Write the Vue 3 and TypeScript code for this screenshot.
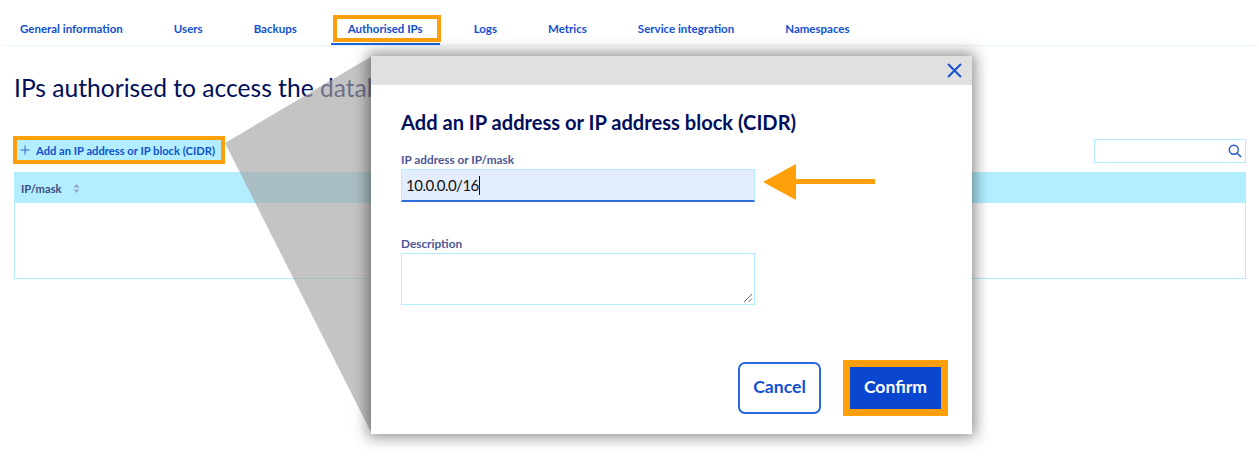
<script setup lang="ts">
const tabs: string[] = ['General information', 'Users', 'Backups', 'Authorised IPs', 'Logs', 'Metrics', 'Service integration', 'Namespaces']
const activeTab = 'Authorised IPs'
</script>

<template>
  <div class="page">
    <nav class="tabs">
      <a v-for="t in tabs" :key="t" class="tab" :class="{ active: t === activeTab }">
        <span class="tab-text">{{ t }}</span>
      </a>
    </nav>
    <main class="content">
      <h1 class="heading">IPs authorised to access the database service</h1>
      <div class="toolbar">
        <button class="add">
          <svg class="plus" viewBox="0 0 10 10" width="10" height="10"><path d="M5 .5v9M.5 5h9" stroke="#3a63c8" stroke-width="1" fill="none" /></svg>
          <span>Add an IP address or IP block (CIDR)</span>
        </button>
        <div class="search">
          <svg viewBox="0 0 14 14" width="14" height="14"><circle cx="5.8" cy="5.8" r="4.5" stroke="#1c55d0" stroke-width="1.4" fill="none" /><path d="M9.2 9.2L13 13" stroke="#1c55d0" stroke-width="1.6" fill="none" /></svg>
        </div>
      </div>
      <div class="table">
        <div class="thead">
          <span>IP/mask</span>
          <svg viewBox="0 0 7 9" width="7" height="9"><path d="M3.5 0L6.5 3.4H.5zM3.5 9L.5 5.6h6z" fill="#9aa2c4" /></svg>
        </div>
        <div class="tbody"></div>
      </div>
    </main>

    <svg class="wedge" width="372" height="457" viewBox="0 0 372 457"><polygon points="225,143 372,56 372,434" fill="rgba(164,164,164,.65)" /></svg>

    <section class="modal">
      <header class="modal-head">
        <svg viewBox="0 0 14 14" width="15" height="15"><path d="M1 1l12 12M13 1L1 13" stroke="#1c55d0" stroke-width="2" fill="none" /></svg>
      </header>
      <div class="modal-body">
        <h2 class="modal-title">Add an IP address or IP address block (CIDR)</h2>
        <label class="field-label">IP address or IP/mask</label>
        <div class="ip-input"><span>10.0.0.0/16</span><i class="caret"></i></div>
        <label class="field-label desc-label">Description</label>
        <div class="desc-input">
          <svg class="grip" viewBox="0 0 10 10" width="10" height="10"><path d="M1 9l8-8M5.5 9L9 5.5" stroke="#666" stroke-width="1" fill="none" /></svg>
        </div>
        <div class="actions">
          <button class="cancel">Cancel</button>
          <button class="confirm">Confirm</button>
        </div>
      </div>
    </section>

    <svg class="arrow" width="114" height="36" viewBox="0 0 114 36"><path d="M0 18L33 0v15h79v5H33v16z" fill="#ff9f0a" /></svg>
  </div>
</template>

<style>
html, body { margin: 0; background: #fff; }
</style>

<style scoped>
.page {
  position: relative;
  width: 1259px;
  height: 457px;
  overflow: hidden;
  background: #fff;
  font-family: Lato, "Open Sans", sans-serif;
  color: #000e5c;
}
.tabs {
  display: flex;
  gap: 17px;
  height: 45px;
  margin: 0 2px 0 3px;
  border-bottom: 1px solid #e6f7fd;
}
.tab {
  display: flex;
  align-items: flex-start;
  height: 45px;
  padding: 0 17px;
  box-sizing: border-box;
  font-size: 11.5px;
  font-weight: 700;
  color: #1150d0;
  position: relative;
  white-space: nowrap;
}
.tab-text { margin-top: 21px; line-height: 16px; }
.tab.active { border-bottom: 2px solid #1c64d8; }
.tab.active::after {
  content: "";
  position: absolute;
  left: 2px;
  right: -1px;
  top: 15px;
  height: 27px;
  border: 4px solid #ff9f0a;
  box-sizing: border-box;
}
.content { padding: 0 13px 0 14px; }
.heading {
  margin: 25px 0 0;
  font-size: 24.6px;
  line-height: 34px;
  font-weight: 400;
  color: #000e5c;
  white-space: nowrap;
}
.toolbar {
  display: flex;
  justify-content: space-between;
  align-items: flex-start;
  margin-top: 34px;
  height: 33px;
}
.add {
  display: flex;
  align-items: center;
  height: 20px;
  width: 204px;
  margin: 1px 0 0 3px;
  padding: 0 0 0 3px;
  border: none;
  background: #b2eeff;
  outline: 4px solid #ff9f0a;
  color: #1150d0;
  font: 700 11.2px Lato, "Open Sans", sans-serif;
  white-space: nowrap;
}
.plus { margin-right: 6px; flex: none; }
.search {
  width: 152px;
  height: 24px;
  border: 1px solid #b2eeff;
  box-sizing: border-box;
  display: flex;
  justify-content: flex-end;
  align-items: center;
  padding-right: 3px;
}
.table { border: 1px solid #b2eeff; }
.thead {
  height: 30px;
  background: #b2eeff;
  display: flex;
  align-items: center;
  gap: 11px;
  padding-left: 6px;
  font-size: 11.2px;
  font-weight: 700;
  color: #3d4a85;
}
.tbody { height: 75px; background: #fff; }
.wedge { position: absolute; left: 0; top: 0; }
.modal {
  position: absolute;
  left: 371px;
  top: 56px;
  width: 601px;
  height: 378px;
  background: #fff;
  box-shadow: 0 0 14px 3px rgba(0, 0, 0, .45);
}
.modal-head {
  height: 29px;
  background: #e0e0e0;
  display: flex;
  justify-content: flex-end;
  align-items: center;
  padding-right: 10px;
}
.modal-body { padding: 25px 25px 0 30px; }
.modal-title {
  margin: 0;
  font-size: 20.1px;
  line-height: 24px;
  font-weight: 700;
  color: #000e5c;
  white-space: nowrap;
}
.field-label {
  display: block;
  margin-top: 18px;
  font-size: 11.8px;
  line-height: 15px;
  font-weight: 700;
  color: #4d5693;
}
.desc-label { margin-top: 34px; }
.ip-input {
  width: 354px;
  height: 33px;
  margin-top: 2px;
  background: #e3edfd;
  border: 1px solid #b2eeff;
  border-bottom: 2px solid #2f6fdc;
  box-sizing: border-box;
  display: flex;
  align-items: center;
  padding-left: 4px;
  font-size: 15px;
  letter-spacing: -0.5px;
  color: #111;
}
.caret { width: 1px; height: 19px; background: #111; }
.desc-input {
  position: relative;
  width: 354px;
  height: 52px;
  margin-top: 2px;
  border: 1px solid #b2eeff;
  box-sizing: border-box;
}
.grip { position: absolute; right: 1px; bottom: 1px; }
.actions {
  display: flex;
  justify-content: flex-end;
  align-items: center;
  gap: 29px;
  margin-top: 57px;
}
.cancel, .confirm {
  font: 700 17.6px Lato, "Open Sans", sans-serif;
  box-sizing: border-box;
  padding: 0 0 4px;
}
.cancel {
  width: 83px;
  height: 52px;
  background: #fff;
  color: #1150d0;
  border: 2px solid #2b68dc;
  border-radius: 7px;
}
.confirm {
  width: 91px;
  height: 42px;
  background: #0a46d0;
  color: #fff;
  border: none;
  outline: 7px solid #ff9f0a;
  margin-right: 6px;
}
.arrow { position: absolute; left: 763px; top: 164px; }
</style>
